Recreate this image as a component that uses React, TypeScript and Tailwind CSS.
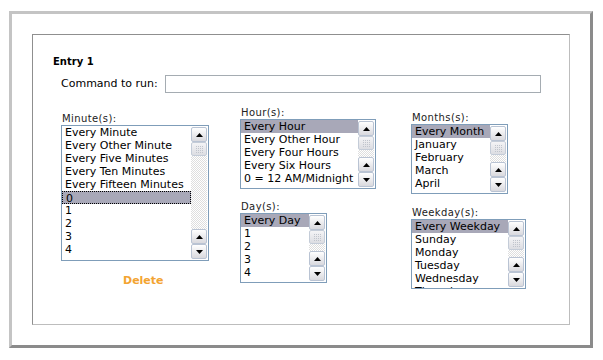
import React from 'react';

type ListBoxProps = {
  width: number;
  height: number;
  items: string[];
  selected?: number;
  focused?: number;
};

function ArrowButton({ down = false }: { down?: boolean }) {
  return (
    <div className="flex h-[15px] w-[16px] items-center justify-center rounded-[2px] border border-[#b9c3d3] bg-gradient-to-b from-[#ffffff] to-[#d9d9de]">
      <svg width="7" height="4" viewBox="0 0 7 4">
        {down ? <polygon points="0,0 7,0 3.5,4" fill="#000" /> : <polygon points="0,4 7,4 3.5,0" fill="#000" />}
      </svg>
    </div>
  );
}

function Thumb() {
  return (
    <div className="flex h-[14px] w-[16px] items-center justify-center rounded-[2px] border border-[#c4ccd8] bg-gradient-to-b from-[#f4f4f6] to-[#dcdde2]">
      <svg width="7" height="7" viewBox="0 0 7 7">
        {[0, 2, 4, 6].map((y) =>
          [0, 2, 4, 6].map((x) => <rect key={`${x}-${y}`} x={x} y={y} width="1" height="1" fill="#c0c4cc" />)
        )}
      </svg>
    </div>
  );
}

function ListBox({ width, height, items, selected, focused }: ListBoxProps) {
  return (
    <div
      className="flex border border-[#7f9db9] bg-white"
      style={{ width, height }}
    >
      <div className="flex-1 overflow-hidden">
        {items.map((item, i) => (
          <div
            key={item + i}
            className={`h-[13px] whitespace-nowrap pl-[3px] text-[11px] leading-[13px] ${
              i === selected ? 'bg-[#a8a8b8]' : ''
            } ${i === focused ? 'border border-dotted border-black bg-[#a8a8b8] pl-[2px] leading-[11px]' : ''}`}
          >
            {item}
          </div>
        ))}
      </div>
      <div className="flex w-[17px] flex-col py-[1px] pr-[1px]">
        <ArrowButton />
        <Thumb />
        <div className="flex-1 bg-[image:repeating-conic-gradient(#dedede_0%_25%,#ffffff_0%_50%)] bg-[length:2px_2px]" />
        <ArrowButton />
        <ArrowButton down />
      </div>
    </div>
  );
}

function Label({ children }: { children: React.ReactNode }) {
  return <div className="h-[12px] pl-[1px] text-[10px] leading-[12px] tracking-[0.4px] text-[#222]">{children}</div>;
}

export default function App() {
  const minutes = [
    'Every Minute',
    'Every Other Minute',
    'Every Five Minutes',
    'Every Ten Minutes',
    'Every Fifteen Minutes',
    '0',
    '1',
    '2',
    '3',
    '4',
  ];
  const hours = ['Every Hour', 'Every Other Hour', 'Every Four Hours', 'Every Six Hours', '0 = 12 AM/Midnight'];
  const days = ['Every Day', '1', '2', '3', '4'];
  const months = ['Every Month', 'January', 'February', 'March', 'April'];
  const weekdays = ['Every Weekday', 'Sunday', 'Monday', 'Tuesday', 'Wednesday', 'Thursday'];

  return (
    <div className="h-[360px] w-[603px] bg-white pl-[9px] pt-[11px] font-['DejaVu_Sans',Verdana,sans-serif] text-black">
      <div className="h-[337px] w-[584px] border-[3px] border-b-[#8b8b8b] border-l-[#c4c4c4] border-r-[#8b8b8b] border-t-[#c4c4c4] pl-[20px] pt-[20px]">
        <div className="h-[291px] w-[538px] border border-b-[#bdbdbd] border-l-[#8f8f8f] border-r-[#bdbdbd] border-t-[#8f8f8f] pl-[20px]">
          <div className="pt-[21px] text-[10px] font-bold leading-[12px]">Entry 1</div>

          {/* command */}
          <div className="mt-[7px] flex h-[18px] items-center pl-[8px]">
            <span className="w-[104px] text-[11px]">Command to run:</span>
            <div className="h-[18px] w-[376px] border border-[#a5acb2] bg-white" />
          </div>

          <div className="flex pl-[8px]">
            {/* minutes */}
            <div className="mt-[20px] w-[179px]">
              <Label>Minute(s):</Label>
              <ListBox width={148} height={136} items={minutes} focused={5} />
              <div className="ml-[62px] mt-[13px] text-[11px] font-bold leading-[14px] text-[#f3a431]">Delete</div>
            </div>

            {/* hours / days */}
            <div className="mt-[14px] w-[171px]">
              <Label>Hour(s):</Label>
              <ListBox width={136} height={70} items={hours} selected={0} />
              <div className="mt-[12px]">
                <Label>Day(s):</Label>
                <ListBox width={87} height={70} items={days} selected={0} />
              </div>
            </div>

            {/* months / weekdays */}
            <div className="mt-[19px]">
              <Label>Months(s):</Label>
              <ListBox width={97} height={70} items={months} selected={0} />
              <div className="mt-[13px]">
                <Label>Weekday(s):</Label>
                <ListBox width={115} height={70} items={weekdays} selected={0} />
              </div>
            </div>
          </div>
        </div>
      </div>
    </div>
  );
}
